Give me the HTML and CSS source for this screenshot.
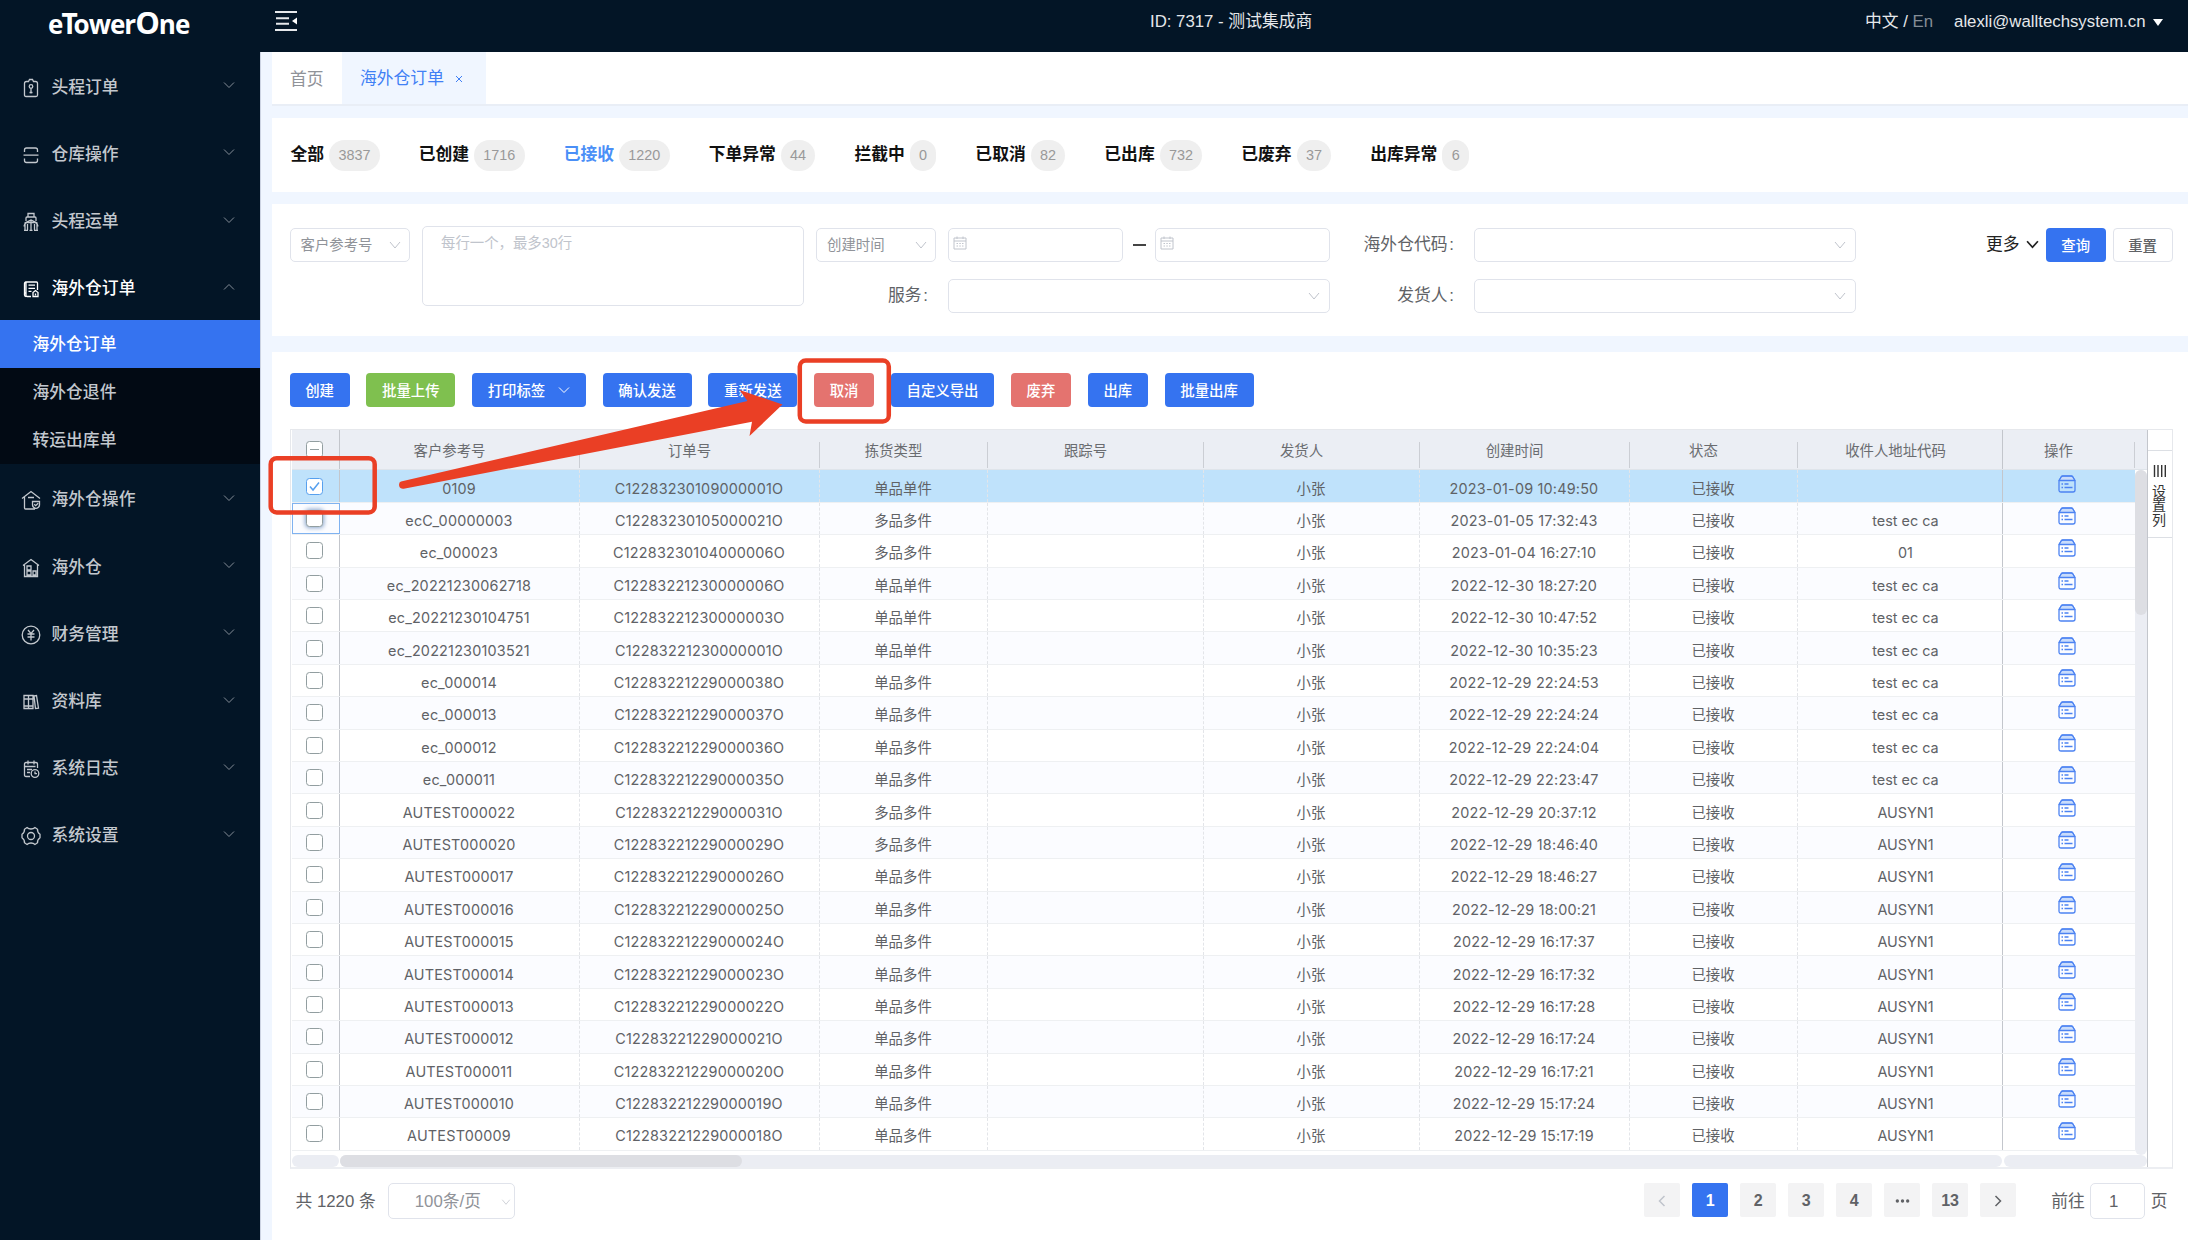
FILE: index.html
```html
<!DOCTYPE html>
<html lang="zh">
<head>
    <meta charset="UTF-8">
    <meta name="viewport" content="width=device-width, initial-scale=1.0">
    <title>eTowerOne - 海外仓订单</title>
    <link rel="stylesheet" href="styles.css">
</head>
<body>
    <!-- 侧边菜单 -->
    <aside class="sidebar">
        <div class="logo"><span class="logo-e">e</span><span class="logo-t">T</span>ower<span class="logo-o">O</span>ne</div>
        <ul class="menu">
            <li class="menu-item">
                <svg class="menu-icon" viewBox="0 0 20 20"><path d="M5.500 3.500h2L8.500 1.500h3l1 2h2q2 0 2 2V17q0 1.500-1.500 1.500h-10Q3.500 18.500 3.500 17V5.500q0-2 2-2z"/><circle cx="10" cy="8.500" r="1.800"/><path d="M10 10.500v5M8.500 14.500h3"/></svg>
                <span>头程订单</span>
                <svg class="arrow" viewBox="0 0 12 8"><path d="M1 1.500l5 5 5-5"/></svg>
            </li>
            <li class="menu-item">
                <svg class="menu-icon" viewBox="0 0 20 20"><path d="M3.500 7V5q0-2 2-2h9q2 0 2 2v2M2.500 10.200h15M3.500 13.500v2q0 2 2 2h9q2 0 2-2v-2"/></svg>
                <span>仓库操作</span>
                <svg class="arrow" viewBox="0 0 12 8"><path d="M1 1.500l5 5 5-5"/></svg>
            </li>
            <li class="menu-item">
                <svg class="menu-icon" viewBox="0 0 20 20"><path d="M7 5V1.500h6V5M5 9V6q0-1 1-1h8q1 0 1 1v3M4 18V11l6-3 6 3v7M10 8v10M3 14.500q1-4 3-4h8q2 0 3 4M6.500 12v6M13.500 12v6M3 18.300h4M8.500 18.300h3M13 18.300h4"/></svg>
                <span>头程运单</span>
                <svg class="arrow" viewBox="0 0 12 8"><path d="M1 1.500l5 5 5-5"/></svg>
            </li>
            <li class="menu-item open">
                <svg class="menu-icon" viewBox="0 0 20 20"><path d="M10 17.500H6q-1 0-1-1V3h10.500q1 0 1 1v7M5 14H3.500v2q0 1.500 1.500 1.500M5 3q-1.500 0-1.500 1.500V14M7.500 6.200h6.500M7.500 9.300h6.500M7.500 12.300h3M12 13.500l2.500-2 2.500 2v4h-5z"/><path d="M14.500 14.500v2"/></svg>
                <span>海外仓订单</span>
                <svg class="arrow" viewBox="0 0 12 8"><path d="M1 6.500l5-5 5 5"/></svg>
            </li>
        </ul>
        <ul class="submenu">
            <li class="submenu-item active">海外仓订单</li>
            <li class="submenu-item">海外仓退件</li>
            <li class="submenu-item">转运出库单</li>
        </ul>
        <ul class="menu">
            <li class="menu-item">
                <svg class="menu-icon" viewBox="0 0 20 20"><path d="M1 8.500L10 1.500l9 7M3.500 7v11q0 1 1 1H14M7 7.500h6M11.500 11.500h7v3.500q0 2.500-3.500 3.500-3.500-1-3.500-3.500zM13.200 14.200l1.500 1.500 2.500-2.500"/></svg>
                <span>海外仓操作</span>
                <svg class="arrow" viewBox="0 0 12 8"><path d="M1 1.500l5 5 5-5"/></svg>
            </li>
            <li class="menu-item">
                <svg class="menu-icon" viewBox="0 0 20 20"><path d="M2 7.500L10 1.500l8 6M3.500 7v11.500h13V7M6 8h4v4H6zM6 13h4v4H6zM12 13h3v4h-3z"/></svg>
                <span>海外仓</span>
                <svg class="arrow" viewBox="0 0 12 8"><path d="M1 1.500l5 5 5-5"/></svg>
            </li>
            <li class="menu-item">
                <svg class="menu-icon" viewBox="0 0 20 20"><circle cx="10" cy="10" r="8.800"/><path d="M7 5l3 3.500L13 5M6.500 9h7M6.500 12h7M10 8.500V15.500"/></svg>
                <span>财务管理</span>
                <svg class="arrow" viewBox="0 0 12 8"><path d="M1 1.500l5 5 5-5"/></svg>
            </li>
            <li class="menu-item">
                <svg class="menu-icon" viewBox="0 0 20 20"><path d="M3 3.500h4.500v13H3zM7.500 3.500H12v13H7.500zM13 4l2.500-.5 2 12.700-3 .3zM3 7h9M3 14h9"/></svg>
                <span>资料库</span>
                <svg class="arrow" viewBox="0 0 12 8"><path d="M1 1.500l5 5 5-5"/></svg>
            </li>
            <li class="menu-item">
                <svg class="menu-icon" viewBox="0 0 20 20"><path d="M9 17.500H5q-1.500 0-1.500-1.500V5Q3.500 3.500 5 3.500h10q1.500 0 1.500 1.500v4M7 1.500v4M13 1.500v4M3.500 7.500h11M6 10.500h5M6 13.500h3"/><circle cx="14" cy="14.500" r="3.800"/><path d="M14 12.500v2.200h2"/></svg>
                <span>系统日志</span>
                <svg class="arrow" viewBox="0 0 12 8"><path d="M1 1.500l5 5 5-5"/></svg>
            </li>
            <li class="menu-item">
                <svg class="menu-icon" viewBox="0 0 20 20"><path d="M6 1.500q1.500 1.500 4 1.500t4-1.500l2.500 1.800q-.3 3 2.500 5v3.400q-2.800 2-2.500 5L14 18.500Q12.500 17 10 17t-4 1.500l-2.500-1.800q.3-3-2.500-5V8.300q2.800-2 2.500-5z"/><circle cx="10" cy="10" r="3.500"/></svg>
                <span>系统设置</span>
                <svg class="arrow" viewBox="0 0 12 8"><path d="M1 1.500l5 5 5-5"/></svg>
            </li>
        </ul>
    </aside>

    <div class="main">
        <!-- 顶部栏 -->
        <header class="topbar">
            <svg class="fold" viewBox="0 0 22 22"><path d="M0 2h22M1 8.200h13M1 13.800h13M0 20h22"/><path class="fill" d="M22 7.500v7l-5-3.500z"/></svg>
            <div class="company">ID: 7317 - 测试集成商</div>
            <div class="lang">中文 / <span>En</span></div>
            <div class="user">alexli@walltechsystem.cn</div>
            <i class="caret"></i>
        </header>

        <div class="content">
            <nav class="tabs">
                <div class="tab">首页</div>
                <div class="tab active">海外仓订单 <svg class="close" viewBox="0 0 8 8"><path d="M1 1l6 6M7 1L1 7"/></svg></div>
            </nav>

            <!-- 订单状态 -->
            <section class="card status">
                <div class="status-item">全部<span>3837</span></div>
                <div class="status-item">已创建<span>1716</span></div>
                <div class="status-item active">已接收<span>1220</span></div>
                <div class="status-item">下单异常<span>44</span></div>
                <div class="status-item">拦截中<span>0</span></div>
                <div class="status-item">已取消<span>82</span></div>
                <div class="status-item">已出库<span>732</span></div>
                <div class="status-item">已废弃<span>37</span></div>
                <div class="status-item">出库异常<span>6</span></div>
            </section>

            <!-- 查询条件 -->
            <section class="card search">
                <div class="box small">客户参考号<svg class="arrow" viewBox="0 0 12 8"><path d="M1 1l5 6 5-6"/></svg></div>
                <div class="box area">每行一个，最多30行</div>
                <div class="fields">
                    <div class="field-row">
                        <div class="box small">创建时间<svg class="arrow" viewBox="0 0 12 8"><path d="M1 1l5 6 5-6"/></svg></div>
                        <div class="box date"><svg class="calendar" viewBox="0 0 14 14"><path d="M1 2h12v11H1zM1 5h12M4 .5v2.500M10 .5v2.500M3.500 7.500h1.500M6.300 7.500h1.500M9 7.500h1.500M3.500 10h1.500M6.300 10h1.500M9 10h1.500"/></svg></div>
                        <i class="dash"></i>
                        <div class="box date"><svg class="calendar" viewBox="0 0 14 14"><path d="M1 2h12v11H1zM1 5h12M4 .5v2.500M10 .5v2.500M3.500 7.500h1.500M6.300 7.500h1.500M9 7.500h1.500M3.500 10h1.500M6.300 10h1.500M9 10h1.500"/></svg></div>
                    </div>
                    <div class="field-row">
                        <label class="label-service">服务<i>:</i></label>
                        <div class="box wide"><svg class="arrow" viewBox="0 0 12 8"><path d="M1 1l5 6 5-6"/></svg></div>
                    </div>
                </div>
                <div class="fields">
                    <div class="field-row">
                        <label>海外仓代码<i>:</i></label>
                        <div class="box wide"><svg class="arrow" viewBox="0 0 12 8"><path d="M1 1l5 6 5-6"/></svg></div>
                    </div>
                    <div class="field-row">
                        <label>发货人<i>:</i></label>
                        <div class="box wide"><svg class="arrow" viewBox="0 0 12 8"><path d="M1 1l5 6 5-6"/></svg></div>
                    </div>
                </div>
                <div class="search-actions">
                    <span class="more">更多</span>
                    <svg class="more-arrow" viewBox="0 0 12 8"><path d="M1 1l5 5.500L11 1"/></svg>
                    <button class="btn primary">查询</button>
                    <button class="btn plain">重置</button>
                </div>
            </section>

            <section class="card list">
                <div class="toolbar">
                    <button class="btn primary">创建</button>
                    <button class="btn success">批量上传</button>
                    <button class="btn primary drop">打印标签<svg class="arrow" viewBox="0 0 12 8"><path d="M1 1.500l5 5 5-5"/></svg></button>
                    <button class="btn primary">确认发送</button>
                    <button class="btn primary">重新发送</button>
                    <button class="btn danger">取消</button>
                    <button class="btn primary">自定义导出</button>
                    <button class="btn danger">废弃</button>
                    <button class="btn primary">出库</button>
                    <button class="btn primary">批量出库</button>
                </div>

                <div class="grid">
                    <div class="grid-table">
                        <div class="grid-head">
                            <div class="c-check"><i class="checkbox half"></i></div>
                            <div class="c-ref">客户参考号</div>
                            <div class="c-order">订单号</div>
                            <div class="c-type">拣货类型</div>
                            <div class="c-track">跟踪号</div>
                            <div class="c-sender">发货人</div>
                            <div class="c-time">创建时间</div>
                            <div class="c-state">状态</div>
                            <div class="c-addr">收件人地址代码</div>
                            <div class="c-op">操作</div>
                        </div>
                        <div class="grid-view">
                            <div class="grid-rows" id="rows"></div>
                            <div class="scroll-y"><i></i></div>
                        </div>
                        <div class="scroll-x">
                            <div class="track-left"></div>
                            <div class="track-mid"><i></i></div>
                            <div class="track-right"></div>
                        </div>
                    </div>
                    <div class="grid-side">
                        <div class="side-tab">
                            <svg viewBox="0 0 14 12"><path d="M1.500 0v12M5 0v12M8.700 0v12M12.300 0v12"/></svg>
                            <span>设置列</span>
                        </div>
                    </div>
                </div>

                <footer class="pager">
                    <span class="total">共 1220 条</span>
                    <div class="box size">100条/页<svg class="arrow" viewBox="0 0 12 8"><path d="M1 1l5 6 5-6"/></svg></div>
                    <div class="pages">
                        <b class="prev"><svg viewBox="0 0 8 12"><path d="M6.500 1l-5 5 5 5"/></svg></b>
                        <b class="current">1</b>
                        <b>2</b>
                        <b>3</b>
                        <b>4</b>
                        <b><svg class="dots" viewBox="0 0 16 4"><circle cx="2.500" cy="2" r="1.800"/><circle cx="8" cy="2" r="1.800"/><circle cx="13.500" cy="2" r="1.800"/></svg></b>
                        <b>13</b>
                        <b><svg viewBox="0 0 8 12"><path d="M1.500 1l5 5-5 5"/></svg></b>
                    </div>
                    <span class="jump">前往</span>
                    <div class="box page-input">1</div>
                    <span>页</span>
                </footer>
            </section>
        </div>
    </div>

    <!-- 操作标注 -->
    <svg class="marks" viewBox="0 0 2188 1240">
        <rect x="270.700" y="458.200" width="104" height="54.300" rx="6"/>
        <rect x="799.800" y="360.500" width="89" height="61" rx="6"/>
        <path d="M401 481.500L747.500 401 739.500 390 782.500 404.500 749.500 436 752 421.700 405 488.500Q400 489.500 399.200 486 398.500 482.300 401 481.500z"/>
    </svg>

    <script src="script.js"></script>
</body>
</html>
```
FILE: styles.css
```css
* {
    box-sizing: border-box;
}
body {
    margin: 0;
    width: 2188px;
    height: 1240px;
    overflow: hidden;
    display: flex;
    position: relative;
    font-family: "Liberation Sans", "Noto Sans CJK SC", sans-serif;
    font-size: 16.8px;
    line-height: 20px;
    color: #606266;
    background-color: #f0f6ff;
}
ul {
    list-style: none;
    margin: 0;
    padding: 0;
}
i {
    font-style: normal;
}
svg {
    display: block;
    flex: none;
    fill: none;
    stroke: currentColor;
}

/* 侧边菜单 */
.sidebar {
    width: 260px;
    flex: none;
    background-color: #031526;
    color: #c3c8ce;
    font-weight: 500;
}
.logo {
    height: 51.600px;
    padding: 8px 0 0 48px;
    font-family: "Open Sans", sans-serif;
    font-size: 26px;
    font-weight: 700;
    line-height: 28px;
    letter-spacing: -1px;
    color: #fff;
    white-space: nowrap;
}
.logo-t {
    font-size: 28px;
    margin-left: -1px;
    letter-spacing: -4px;
}
.logo-o {
    font-size: 31px;
}
.menu-item {
    height: 67.200px;
    padding: 5px 25px 0 21px;
    display: flex;
    align-items: center;
}
.menu-item.open {
    color: #fff;
}
.menu-icon {
    width: 20px;
    height: 20px;
    margin-right: 10.500px;
    stroke-width: 1.300;
}
.arrow {
    width: 12px;
    height: 8px;
    margin-left: auto;
    color: #c0c4cc;
}
.menu-item .arrow {
    color: #858d97;
    margin-bottom: 5px;
}
.submenu {
    background-color: #020a14;
}
.submenu-item {
    height: 48px;
    line-height: 50px;
    padding-left: 32.500px;
}
.submenu-item.active {
    background-color: #3573f0;
    color: #fff;
}

/* 顶部栏 */
.main {
    flex: 1;
    min-width: 0;
    display: flex;
    flex-direction: column;
}
.topbar {
    height: 51.600px;
    flex: none;
    padding: 0 25px 7px 15px;
    display: flex;
    align-items: center;
    background-color: #031526;
    color: #e6e8eb;
}
.fold {
    width: 22px;
    height: 22px;
    margin-top: -2px;
    stroke-width: 2;
}
.fold .fill {
    fill: #fff;
    stroke: none;
}
.company {
    margin-left: 853px;
}
.lang {
    margin-left: auto;
    margin-right: 21px;
}
.lang span {
    color: #858d97;
}
.caret {
    margin-left: 7.500px;
    border: 5px solid transparent;
    border-top: 7px solid #fff;
    border-bottom: 0;
}
.content {
    flex: 1;
    padding-left: 11.500px;
    display: flex;
    flex-direction: column;
    border-left: 1px solid #ccd3e2;
    margin-left: -.5px;
}

/* 标签页 */
.tabs {
    height: 54px;
    flex: none;
    display: flex;
    background-color: #fff;
    border-bottom: 2px solid #e9eef6;
    margin-bottom: 12px;
}
.tab {
    padding: 0 0 0 18px;
    line-height: 55px;
    color: #909399;
    width: 70px;
    white-space: nowrap;
}
.tab.active {
    width: 143.500px;
    padding-top: 2px;
    display: flex;
    align-items: center;
    color: #4080f5;
    background-color: #f0f6ff;
}
.close {
    width: 8px;
    height: 8px;
    margin-left: 11px;
}

.card {
    background-color: #fff;
    flex: none;
}

/* 订单状态 */
.status {
    height: 74.400px;
    margin-bottom: 12px;
    padding: 1px 0 0 18.500px;
    display: flex;
    align-items: center;
    gap: 39px;
}
.status-item {
    display: flex;
    align-items: center;
    gap: 5px;
    font-weight: 700;
    color: #111;
}
.status-item.active {
    color: #4a8ff7;
}
.status-item span {
    padding: 0 9.300px;
    line-height: 31px;
    border-radius: 16px;
    font-size: 14.400px;
    font-weight: 400;
    color: #999;
    background-color: #efefef;
}

/* 查询条件 */
.search {
    height: 132px;
    margin-bottom: 16px;
    padding: 22px 15.500px 0 17.500px;
    display: flex;
    align-items: flex-start;
}
.box {
    height: 34px;
    display: flex;
    align-items: center;
    border: 1px solid #e0e3eb;
    border-radius: 5px;
    background-color: #fff;
}
.box.small {
    width: 120px;
    margin-top: 2px;
    padding: 0 8px 0 10px;
    font-size: 14.400px;
    color: #909399;
}
.box.area {
    width: 382px;
    height: 80px;
    margin: 0 12px 0 12.500px;
    padding: 6px 18px;
    align-items: flex-start;
    font-size: 14.400px;
    color: #c0c4cc;
}
.fields {
    display: flex;
    flex-direction: column;
    gap: 16.500px;
}
.field-row {
    display: flex;
    align-items: center;
    height: 34px;
}
.fields .box {
    margin-top: 5px;
}
.fields .box.small {
    margin-top: 4px;
    margin-right: 12px;
}
.box.date {
    width: 175px;
    padding: 0 0 5px 4px;
}
.calendar {
    width: 14px;
    height: 14px;
    color: #c0c4cc;
}
.dash {
    width: 13px;
    height: 2px;
    margin: 4px 9.500px 0;
    background-color: #444;
}
.box.wide {
    width: 382px;
    padding-right: 9px;
}
label {
    width: 144px;
    padding: 5px 20px 0 0;
    text-align: right;
}
label i {
    display: inline-block;
    width: 6.500px;
    text-align: right;
}
.label-service {
    width: 132px;
}
.search-actions {
    margin-left: auto;
    padding-top: 2px;
    display: flex;
    align-items: center;
}
.more {
    color: #222;
}
.more-arrow {
    width: 13px;
    height: 9px;
    margin: 0 7px 0 6px;
    color: #222;
    stroke-width: 1.600;
}
.btn {
    height: 34px;
    padding: 0 15.650px 1px;
    border: none;
    border-radius: 4px;
    font-family: inherit;
    font-size: 14.400px;
    font-weight: 500;
    color: #fff;
    white-space: nowrap;
}
.btn.primary {
    background-color: #3573f0;
}
.btn.success {
    background-color: #7fc04f;
}
.btn.danger {
    background-color: #e4736f;
}
.btn.plain {
    margin-left: 7px;
    padding: 0 14.500px 1px;
    border: 1px solid #e0e3eb;
    color: #606266;
    background-color: #fff;
}

/* 订单列表 */
.list {
    flex: 1;
    padding: 21.500px 15.500px 0 17.500px;
}
.toolbar {
    display: flex;
    gap: 16.800px;
    margin-bottom: 21.500px;
}
.btn.drop {
    display: flex;
    align-items: center;
    gap: 13px;
}
.btn.drop .arrow {
    color: #fff;
}
.grid {
    height: 740.500px;
    display: flex;
    border: 1px solid #e6e8ec;
    border-bottom: 2px solid #eceef2;
}
.grid-table {
    width: 1856px;
    display: flex;
    flex-direction: column;
    padding-left: 1px;
    font-family: Inter, "Noto Sans CJK SC", sans-serif;
    font-size: 14.400px;
}
.grid-head {
    height: 40.500px;
    flex: none;
    display: flex;
    background-color: #ebeef4;
    border-bottom: 1px solid #dfe4ea;
    color: #6a6c70;
}
.grid-head div {
    flex: none;
    display: flex;
    align-items: center;
    justify-content: center;
    padding: 3px 20px 0 0;
    background: linear-gradient(#cbced4, #cbced4) right 12px / 1px 26px no-repeat;
}
.grid-head .c-check {
    padding: 0 2px 0 0;
    background: none;
    border-right: 1px solid #c3c6cc;
}
.grid-head .c-addr {
    padding: 3px 8px 0 0;
    background: none;
    border-right: 1px solid #c3c6cc;
}
.c-check { width: 48px; }
.c-ref { width: 240px; }
.c-order { width: 240px; }
.c-type { width: 168px; }
.c-track { width: 216px; }
.c-sender { width: 216px; }
.c-time { width: 210px; }
.c-state { width: 168px; }
.c-addr { width: 205px; }
.c-op { width: 132px; }
.grid-view {
    flex: 1;
    min-height: 0;
    display: flex;
    overflow: hidden;
}
.row {
    height: 32.400px;
    display: flex;
    border-bottom: 1.500px solid #eef0f2;
}
.row:nth-child(even) {
    background-color: #fbfcff;
}
.row.selected {
    background-color: #bfe2fb;
}
.row div {
    flex: none;
    display: flex;
    align-items: center;
    justify-content: center;
    padding-top: 5px;
    border-right: 1px dashed #e3e5e9;
}
.row .c-ref,
.row .c-order,
.row .c-time {
    letter-spacing: .2px;
}
.row .c-check {
    padding: 0 2px 0 0;
    border-right: 1px solid #c3c6cc;
}
.row .c-addr {
    padding-left: 12px;
    border-right: 1px solid #c3c6cc;
}
.row .c-op {
    padding: 0 3px 5px 0;
    border-right: none;
    color: #4c83f2;
}
.row .c-check.focus {
    border: 1px solid #7fb2f0;
}
.checkbox {
    width: 17px;
    height: 17px;
    display: flex;
    align-items: center;
    justify-content: center;
    border: 1.500px solid #929ea0;
    border-radius: 3.500px;
    background-color: #fff;
}
.checkbox.half::before {
    content: "";
    width: 9px;
    height: 1px;
    background-color: #929ea0;
}
.checkbox.checked {
    border-color: #57a0ee;
    color: #57a0ee;
}
.focus .checkbox {
    box-shadow: 0 0 4px 1px #8aa6cc;
}
.op-icon {
    width: 18px;
    height: 18px;
}
.scroll-y {
    width: 12px;
    flex: none;
    border-radius: 6px;
    background-color: #ebedf3;
}
.scroll-y i {
    display: block;
    height: 145px;
    border-radius: 6px;
    background-color: #dddee3;
}
.scroll-x {
    height: 12px;
    flex: none;
    display: flex;
}
.scroll-x div {
    border-radius: 6px;
    background-color: #ebedf3;
}
.track-left {
    width: 47px;
    margin-right: 1px;
}
.track-mid {
    width: 1662px;
    margin-right: 2px;
}
.track-mid i {
    display: block;
    width: 402px;
    height: 12px;
    border-radius: 6px;
    background-color: #dddee3;
}
.track-right {
    flex: 1;
}
.grid-side {
    flex: 1;
    padding-top: 20px;
    border-left: 1px solid #c3c6cc;
}
.side-tab {
    height: 88px;
    padding-top: 14px;
    border-top: 1px solid #dcdfe4;
    border-bottom: 1px solid #dcdfe4;
    display: flex;
    flex-direction: column;
    align-items: center;
    gap: 7px;
    color: #333;
}
.side-tab svg {
    width: 14px;
    height: 12px;
    stroke-width: 1.400;
}
.side-tab span {
    width: 15px;
    font-size: 14px;
    line-height: 14.500px;
    word-break: break-all;
}

/* 分页 */
.pager {
    height: 36px;
    margin-top: 14px;
    padding: 0 5px 0 6px;
    display: flex;
    align-items: center;
    white-space: nowrap;
}
.pager span {
    padding-top: 1.500px;
}
.box.size {
    width: 127px;
    height: 36px;
    margin-left: 12px;
    padding: 1.500px 3px 0 26px;
    color: #909399;
}
.size .arrow {
    width: 10px;
    height: 6px;
}
.pages {
    margin-left: auto;
    display: flex;
    gap: 12px;
    align-self: flex-start;
}
.pages b {
    width: 36px;
    height: 33.500px;
    padding-top: 1px;
    display: flex;
    align-items: center;
    justify-content: center;
    border-radius: 2px;
    font-size: 16px;
    background-color: #f3f3f4;
}
.pages svg {
    width: 8px;
    height: 12px;
    stroke-width: 1.500;
}
.pages .prev {
    color: #c0c4cc;
}
.pages .current {
    color: #fff;
    background-color: #3573f0;
}
.pages .dots {
    width: 15px;
    height: 4px;
    fill: currentColor;
    stroke: none;
}
.jump {
    margin-left: 35px;
}
.box.page-input {
    width: 55px;
    height: 36px;
    margin: 0 5.500px;
    justify-content: center;
    padding: 1.500px 8px 0 0;
}

/* 操作标注 */
.marks {
    position: absolute;
    left: 0;
    top: 0;
    width: 2188px;
    height: 1240px;
}
.marks rect {
    stroke: #ea3f25;
    stroke-width: 4.500;
}
.marks path {
    fill: #ea3f25;
    stroke: none;
}
```
FILE: script.js
```js
// 订单数据: 客户参考号, 订单号, 拣货类型, 创建时间, 收件人地址代码
var orders = [
    ['0109', 'C12283230109000001O', '单品单件', '2023-01-09 10:49:50', ''],
    ['ecC_00000003', 'C12283230105000021O', '多品多件', '2023-01-05 17:32:43', 'test ec ca'],
    ['ec_000023', 'C12283230104000006O', '多品多件', '2023-01-04 16:27:10', '01'],
    ['ec_20221230062718', 'C12283221230000006O', '单品单件', '2022-12-30 18:27:20', 'test ec ca'],
    ['ec_20221230104751', 'C12283221230000003O', '单品单件', '2022-12-30 10:47:52', 'test ec ca'],
    ['ec_20221230103521', 'C12283221230000001O', '单品单件', '2022-12-30 10:35:23', 'test ec ca'],
    ['ec_000014', 'C12283221229000038O', '单品多件', '2022-12-29 22:24:53', 'test ec ca'],
    ['ec_000013', 'C12283221229000037O', '单品多件', '2022-12-29 22:24:24', 'test ec ca'],
    ['ec_000012', 'C12283221229000036O', '单品多件', '2022-12-29 22:24:04', 'test ec ca'],
    ['ec_000011', 'C12283221229000035O', '单品多件', '2022-12-29 22:23:47', 'test ec ca'],
    ['AUTEST000022', 'C12283221229000031O', '多品多件', '2022-12-29 20:37:12', 'AUSYN1'],
    ['AUTEST000020', 'C12283221229000029O', '多品多件', '2022-12-29 18:46:40', 'AUSYN1'],
    ['AUTEST000017', 'C12283221229000026O', '单品多件', '2022-12-29 18:46:27', 'AUSYN1'],
    ['AUTEST000016', 'C12283221229000025O', '单品多件', '2022-12-29 18:00:21', 'AUSYN1'],
    ['AUTEST000015', 'C12283221229000024O', '单品多件', '2022-12-29 16:17:37', 'AUSYN1'],
    ['AUTEST000014', 'C12283221229000023O', '单品多件', '2022-12-29 16:17:32', 'AUSYN1'],
    ['AUTEST000013', 'C12283221229000022O', '单品多件', '2022-12-29 16:17:28', 'AUSYN1'],
    ['AUTEST000012', 'C12283221229000021O', '单品多件', '2022-12-29 16:17:24', 'AUSYN1'],
    ['AUTEST000011', 'C12283221229000020O', '单品多件', '2022-12-29 16:17:21', 'AUSYN1'],
    ['AUTEST000010', 'C12283221229000019O', '单品多件', '2022-12-29 15:17:24', 'AUSYN1'],
    ['AUTEST00009', 'C12283221229000018O', '单品多件', '2022-12-29 15:17:19', 'AUSYN1']
];

var opIcon = '<svg class="op-icon" viewBox="0 0 18 18"><path fill="#c9dcfb" d="M1 5.500L3.500 1h11L17 5.500z"/><path stroke-width="1.300" d="M1 5.500h16V15q0 2-2 2H3q-2 0-2-2zM1 5.500L3.200 2Q3.800 1 5 1h8q1.200 0 1.800 1L17 5.500M3.500 9h1.500M6.500 9h4M3.500 12.500h1.500M6.500 12.500h8"/></svg>';
var tick = '<svg width="13" height="11" viewBox="0 0 13 11"><path stroke-width="1.500" d="M2 5.500l3 3.500 6-7.500"/></svg>';

function createRow(o, index) {
    var selected = index === 0;
    return `<div class="row${selected ? ' selected' : ''}">
        <div class="c-check${index === 1 ? ' focus' : ''}"><i class="checkbox${selected ? ' checked' : ''}">${selected ? tick : ''}</i></div>
        <div class="c-ref">${o[0]}</div>
        <div class="c-order">${o[1]}</div>
        <div class="c-type">${o[2]}</div>
        <div class="c-track"></div>
        <div class="c-sender">小张</div>
        <div class="c-time">${o[3]}</div>
        <div class="c-state">已接收</div>
        <div class="c-addr">${o[4]}</div>
        <div class="c-op">${opIcon}</div>
    </div>`;
}

document.getElementById('rows').innerHTML = orders.map(createRow).join('');
```
